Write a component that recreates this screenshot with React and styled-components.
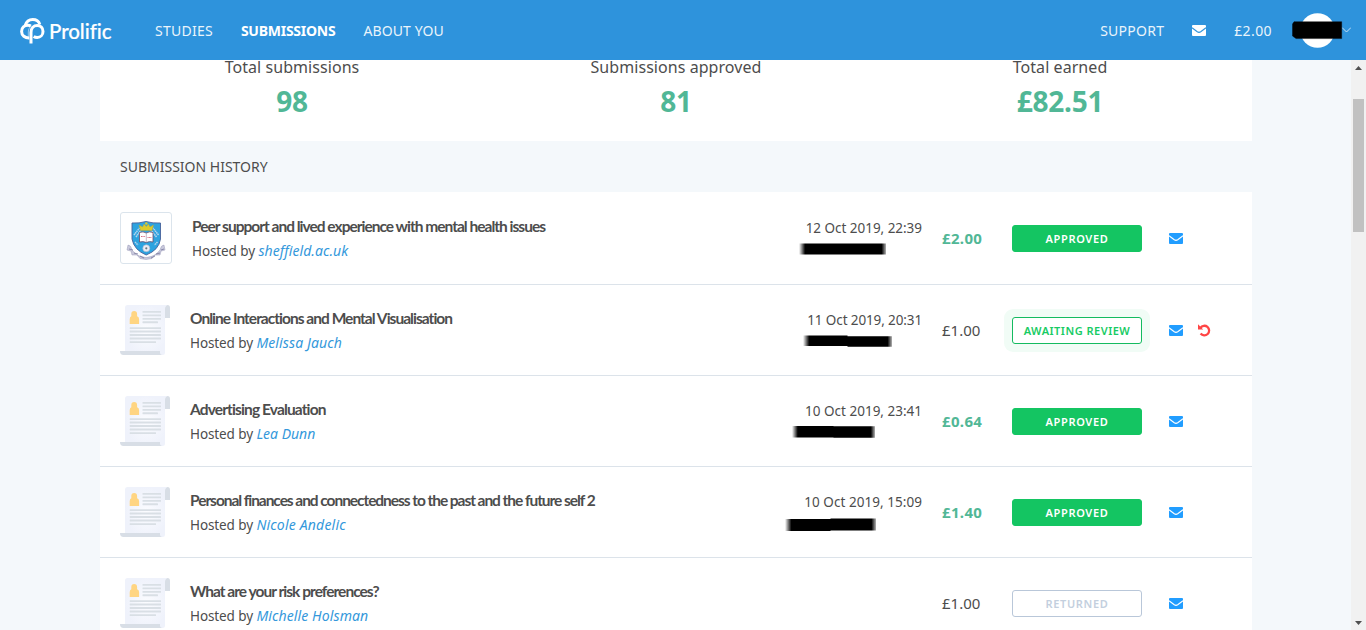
import React from "react";
import styled, { createGlobalStyle, css } from "styled-components";

const GlobalStyle = createGlobalStyle`
  * {
    box-sizing: border-box;
  }
  body {
    margin: 0;
    overflow: hidden;
    background: #f4f8fb;
    color: #4d4d4d;
    font-family: "Noto Sans", "Open Sans", sans-serif;
  }
  svg {
    display: block;
    flex: none;
  }
`;

const Page = styled.div`
  display: flex;
  flex-direction: column;
  width: 1366px;
  height: 630px;
`;

const Header = styled.header`
  display: flex;
  flex: none;
  align-items: center;
  justify-content: space-between;
  height: 60px;
  padding: 1px 15px 0 20px;
  background: #2e93dc;
  color: #fff;
`;

const Brand = styled.div`
  display: flex;
  align-items: center;
  width: 107px;
  gap: 3px;
`;

const BrandName = styled.span`
  font: 500 20.5px/26px Lato, sans-serif;
  letter-spacing: -0.05px;
  -webkit-text-stroke: 0.2px #fff;
`;

const Nav = styled.nav`
  display: flex;
  align-items: center;
  gap: 28px;
`;

const NavLink = styled.a`
  font-size: 14px;
  font-weight: ${(props) => (props.$active ? 700 : 400)};
  letter-spacing: ${(props) => props.$spacing || 0}px;
  opacity: ${(props) => (props.$active ? 1 : 0.9)};
  white-space: nowrap;
`;

const Account = styled.div`
  display: flex;
  margin-left: -9px;
`;

const Body = styled.div`
  display: flex;
  flex: 1;
  min-height: 0;
`;

const Content = styled.main`
  flex: 1;
  padding: 0 99px 0 100px;
  overflow: hidden;
`;

const Stats = styled.section`
  display: grid;
  grid-template-columns: repeat(3, 1fr);
  align-items: end;
  height: 81px;
  padding-bottom: 20px;
  background: #fff;
  text-align: center;
`;

const Stat = styled.div`
  display: flex;
  flex-direction: column;
  justify-content: flex-end;
  height: 61px;
`;

const StatLabel = styled.div`
  flex: none;
  font-size: 16px;
  line-height: 28px;
  letter-spacing: 0.06px;
`;

const StatValue = styled.div`
  flex: none;
  color: #51b796;
  font-size: 28px;
  font-weight: 700;
  line-height: 40px;
  letter-spacing: -0.2px;
`;

const SectionTitle = styled.h2`
  height: 51px;
  margin: 0;
  padding-left: 20px;
  font-size: 14px;
  font-weight: 400;
  line-height: 51px;
`;

const Row = styled.article`
  display: flex;
  align-items: center;
  padding: 20px 0 20px 20px;
  border-bottom: 1px solid #dce3ea;
  background: #fff;
`;

const CrestFrame = styled.div`
  width: 52px;
  height: 52px;
  border: 1px solid #dbe4ec;
  border-radius: 3px;
`;

const Study = styled.div`
  flex: 1;
  height: 49px;
  margin-left: 20px;
  white-space: nowrap;
`;

const StudyTitle = styled.h3`
  margin: 0;
  font: 700 15.5px/25px Lato, sans-serif;
  letter-spacing: ${(props) => props.$spacing}px;
`;

const Host = styled.div`
  font-size: 13.5px;
  line-height: 24px;
  letter-spacing: -0.1px;
`;

const HostLink = styled.a`
  color: #3498db;
  font-size: 14px;
  font-style: italic;
  letter-spacing: ${(props) => props.$spacing}px;
`;

const When = styled.div`
  display: flex;
  flex-direction: column;
  align-items: flex-end;
  gap: 2px;
  font-size: 13.5px;
  line-height: 20px;
  letter-spacing: ${(props) => props.$spacing}px;
`;

const HiddenCode = styled.div`
  margin-right: ${(props) => props.$offset}px;
`;

const Reward = styled.div`
  width: 90px;
  padding: 0 0 1px 20px;
  font-size: 15px;
  line-height: 22px;
  ${(props) =>
    props.$paid &&
    css`
      color: #51b796;
      font-weight: 700;
      letter-spacing: 0.35px;
    `}
`;

const badgeColors = {
  approved: css`
    border-color: #14c562;
    background: #14c562;
    color: #fff;
    letter-spacing: 0.65px;
  `,
  awaiting: css`
    border-color: #14bb60;
    box-shadow: 0 0 0 8px #f1fcf6;
    color: #17cb64;
    letter-spacing: 0.5px;
  `,
  returned: css`
    border-color: #b9c7d9;
    color: #c3cfde;
    letter-spacing: 0.65px;
  `,
};

const Badge = styled.div`
  width: 130px;
  height: 27px;
  margin-top: 1px;
  border: 1px solid;
  border-radius: 3px;
  font-size: 11px;
  font-weight: 600;
  line-height: 26px;
  text-align: center;
  ${(props) => badgeColors[props.$status]}
`;

const Actions = styled.div`
  display: flex;
  align-items: center;
  gap: 15px;
  width: 110px;
  padding: 1px 0 0 27px;
`;

const Scrollbar = styled.div`
  display: flex;
  flex-direction: column;
  align-items: center;
  width: 15px;
  padding: 6px 0 5px;
  background: #f1f1f1;
`;

const Thumb = styled.div`
  width: 11px;
  height: 133px;
  margin: 29px 0 auto;
  background: #c1c1c1;
`;

const LogoMark = () => (
  <svg width="26" height="26" viewBox="0 0 26 26" fill="none" stroke="#fff">
    <path d="M5 7.6C6.4 3.5 9.6 1.5 12.7 1.5c3.3 0 6.2 2 7.2 5" strokeWidth="2.8" />
    <path d="M9.3 20C5 20.2 1.6 17.3 1.6 13.4 1.6 9.6 4.4 7.2 8 7.2c1.2 0 2 .2 2.8.6" strokeWidth="3" />
    <path d="M11 25.5V14.4c0-4.2 2.8-7 6.2-7 3.3 0 5.8 2.6 5.8 6 0 3.6-2.6 6.1-5.8 6.1-1.4 0-2.5-.3-3.5-1" strokeWidth="3" />
    <path d="M8.3 20V14c0-3 1.4-5 3.3-6.2" strokeWidth="1" opacity="0.5" />
  </svg>
);

const MailIcon = ({ color, line }) => (
  <svg width="14" height="11" viewBox="0 0 14 11">
    <rect width="14" height="11" rx="1" fill={color} />
    <path d="M0 2.8 5.3 6.8Q7 8 8.7 6.8L14 2.8" fill="none" stroke={line} strokeWidth="1.1" />
  </svg>
);

const UndoIcon = () => (
  <svg width="13" height="13" viewBox="0 0 13 13">
    <path d="M2.4 3.8A4.8 4.8 0 1 1 2.6 9.6" fill="none" stroke="#ff4545" strokeWidth="2.3" />
    <path d="M0 .3V5.5H5.2Z" fill="#ff4545" />
  </svg>
);

const AccountMenu = () => (
  <svg width="60" height="36" viewBox="0 0 60 36">
    <circle cx="26.5" cy="17.5" r="17.3" fill="#fff" />
    <path d="M51 14.5 55.5 19 60 14.5" fill="none" stroke="#c6e1f6" />
    <path d="M3 8.7H50.7V25.6H5L1.5 23V11Z" fill="#000" stroke="#000" strokeOpacity="0.4" />
  </svg>
);

const textLines = [
  [22.5, 6.9, 18.5],
  [22.5, 10.4, 18.5],
  [22.5, 13.9, 18.5],
  [22.5, 17.3, 15.5],
  [9.7, 23.1, 31.3],
  [9.7, 26.5, 31.3],
  [9.7, 30, 31.3],
  [9.7, 33.5, 31.3],
  [9.7, 37.1, 26.3],
];

const DocumentIcon = () => (
  <svg width="50" height="50" viewBox="0 0 50 50">
    <defs>
      <radialGradient id="paper">
        <stop offset="0" stopColor="#fbfcff" />
        <stop offset="1" stopColor="#eff2fb" />
      </radialGradient>
    </defs>
    <path d="M45 3a2.5 3 0 0 1 5 0V13H45Z" fill="#d8dee6" />
    <path d="M7.5 0H47.5Q45 .5 45 4V47.5Q45 50 42.5 50H5V2.5Q5 0 7.5 0Z" fill="url(#paper)" />
    <path d="M0 46H40V48Q40 49.5 42 50H3.5Q0 50 0 46Z" fill="#d8dee6" />
    <path d="M11.3 9a2.9 2.9 0 0 1 5.8 0v2.2q2 .6 2 3V19H9.7V14.2q0-2.4 1.6-3Z" fill="#ffd582" />
    {textLines.map(([x, y, width]) => (
      <rect key={`${x}-${y}`} x={x} y={y - 0.95} width={width} height="1.9" rx="0.4" fill="#d9dfe5" />
    ))}
  </svg>
);

const Crest = () => (
  <svg width="50" height="50" viewBox="0 0 50 50">
    <path d="M7 32q3 0 4 5 5 7 14 7.5 9-.5 14-7.5 1-5 4-5l1 5-4 1-1 4-5 0-3 3.500-6 1-6-1-3-3.500-5 0-1-4-4-1Z" fill="#c9c9dc" stroke="#9a9ab8" strokeWidth="0.5" />
    <path d="M8 36l4 1M13 40l4 1M19 43l4 2M30 45l4-2M35 41l4-1M40 37l3-1" stroke="#77769a" strokeWidth="0.8" />
    <path d="M11 10Q18 10.5 25 8.5 32 10.5 39.5 10V26Q38 37 25.2 42 13 37 11 26Z" fill="#2ca3df" stroke="#47619a" strokeWidth="0.9" />
    <path d="M13 22 18.5 15M15 24 20 17M37.5 22 32 15M35.5 24 30 17M14 29 17 32M36.5 29 33.5 32" stroke="#b5d5ed" strokeWidth="1.5" strokeDasharray="1.5 .5" />
    <path d="M18 12 21.5 14 23 11 25.3 13.5 27.5 11 29 14 32.5 12 31 17.5H19.5Z" fill="#dccb2d" stroke="#a9a548" strokeWidth="0.5" />
    <circle cx="25.3" cy="10.5" r="1.3" fill="#dccb2d" />
    <path d="M18.5 19.5Q22 18 25.3 20 28.5 18 32 19.5V29Q28.5 28 25.3 29.5 22 28 18.5 29Z" fill="#fff" stroke="#6a4c6a" strokeWidth="0.8" />
    <path d="M25.3 20V29" stroke="#9a8ca0" strokeWidth="0.6" />
    <path d="M20 23.5H24.3M26.500 24.5H30.8" stroke="#d66e80" strokeWidth="1.2" strokeDasharray="1 .4" />
    <circle cx="25.3" cy="35.3" r="3.5" fill="#e9edf5" stroke="#a9b4cb" strokeWidth="0.6" />
    <circle cx="25.3" cy="35.3" r="1.1" fill="#6c7680" />
  </svg>
);

const Scribble = ({ width, top, height, step }) => (
  <svg width={width} height="18" viewBox={`0 0 ${width} 18`}>
    <defs>
      <linearGradient id={`ink${width}`}>
        <stop offset="0" stopOpacity="0" />
        <stop offset="0.07" stopOpacity="1" />
        <stop offset="0.95" stopOpacity="1" />
        <stop offset="1" stopOpacity="0.3" />
      </linearGradient>
    </defs>
    <path
      d={`M0 ${top}H${width * 0.5}V${top + step}H${width}V${top + height + step}H${width * 0.5}V${top + height}H0Z`}
      fill={`url(#ink${width})`}
    />
  </svg>
);

const ArrowIcon = ({ down }) => (
  <svg width="7" height="4" viewBox="0 0 7 4">
    <path d={down ? "M0 0H7L3.5 4Z" : "M0 4H7L3.5 0Z"} fill="#505050" />
  </svg>
);

const stats = [
  { label: "Total submissions", value: "98" },
  { label: "Submissions approved", value: "81" },
  { label: "Total earned", value: "£82.51" },
];

const submissions = [
  {
    title: "Peer support and lived experience with mental health issues",
    titleSpacing: -0.99,
    host: "sheffield.ac.uk",
    hostSpacing: 0.07,
    crest: true,
    date: "12 Oct 2019, 22:39",
    dateSpacing: -0.03,
    code: { width: 87, top: 3.5, height: 11, step: 0, offset: 36 },
    reward: "£2.00",
    status: "approved",
  },
  {
    title: "Online Interactions and Mental Visualisation",
    titleSpacing: -0.97,
    host: "Melissa Jauch",
    hostSpacing: 0.12,
    date: "11 Oct 2019, 20:31",
    dateSpacing: -0.12,
    code: { width: 89, top: 3.5, height: 10.5, step: 0.7, offset: 30 },
    reward: "£1.00",
    status: "awaiting",
  },
  {
    title: "Advertising Evaluation",
    titleSpacing: -0.87,
    host: "Lea Dunn",
    hostSpacing: 0,
    date: "10 Oct 2019, 23:41",
    dateSpacing: 0,
    code: { width: 83, top: 3, height: 11.5, step: 0.3, offset: 47 },
    reward: "£0.64",
    status: "approved",
  },
  {
    title: "Personal finances and connectedness to the past and the future self 2",
    titleSpacing: -1.05,
    host: "Nicole Andelic",
    hostSpacing: 0.2,
    date: "10 Oct 2019, 15:09",
    dateSpacing: 0.05,
    code: { width: 91, top: 5, height: 12, step: -0.5, offset: 46 },
    reward: "£1.40",
    status: "approved",
  },
  {
    title: "What are your risk preferences?",
    titleSpacing: -0.97,
    host: "Michelle Holsman",
    hostSpacing: 0.12,
    reward: "£1.00",
    status: "returned",
  },
];

const statusLabels = {
  approved: "APPROVED",
  awaiting: "AWAITING REVIEW",
  returned: "RETURNED",
};

const Submission = ({ item }) => (
  <Row>
    {item.crest ? (
      <CrestFrame>
        <Crest />
      </CrestFrame>
    ) : (
      <DocumentIcon />
    )}
    <Study>
      <StudyTitle $spacing={item.titleSpacing}>{item.title}</StudyTitle>
      <Host>
        Hosted by <HostLink $spacing={item.hostSpacing}>{item.host}</HostLink>
      </Host>
    </Study>
    {item.date && (
      <When $spacing={item.dateSpacing}>
        {item.date}
        <HiddenCode $offset={item.code.offset}>
          <Scribble {...item.code} />
        </HiddenCode>
      </When>
    )}
    <Reward $paid={item.status === "approved"}>{item.reward}</Reward>
    <Badge $status={item.status}>{statusLabels[item.status]}</Badge>
    <Actions>
      <MailIcon color="#219dff" line="#fff" />
      {item.status === "awaiting" && <UndoIcon />}
    </Actions>
  </Row>
);

const App = () => {
  return (
    <Page>
      <GlobalStyle />
      <Header>
        <Nav>
          <Brand>
            <LogoMark />
            <BrandName>Prolific</BrandName>
          </Brand>
          <NavLink $spacing={0.25}>STUDIES</NavLink>
          <NavLink $active $spacing={-0.25}>
            SUBMISSIONS
          </NavLink>
          <NavLink $spacing={0.1}>ABOUT YOU</NavLink>
        </Nav>
        <Nav>
          <NavLink $spacing={0.25}>SUPPORT</NavLink>
          <MailIcon color="#fff" line="#2e93dc" />
          <NavLink $spacing={0.4}>£2.00</NavLink>
          <Account>
            <AccountMenu />
          </Account>
        </Nav>
      </Header>
      <Body>
        <Content>
          <Stats>
            {stats.map((stat) => (
              <Stat key={stat.label}>
                <StatLabel>{stat.label}</StatLabel>
                <StatValue>{stat.value}</StatValue>
              </Stat>
            ))}
          </Stats>
          <SectionTitle>SUBMISSION HISTORY</SectionTitle>
          {submissions.map((item) => (
            <Submission key={item.title} item={item} />
          ))}
        </Content>
        <Scrollbar>
          <ArrowIcon />
          <Thumb />
          <ArrowIcon down />
        </Scrollbar>
      </Body>
    </Page>
  );
};

export default App;
